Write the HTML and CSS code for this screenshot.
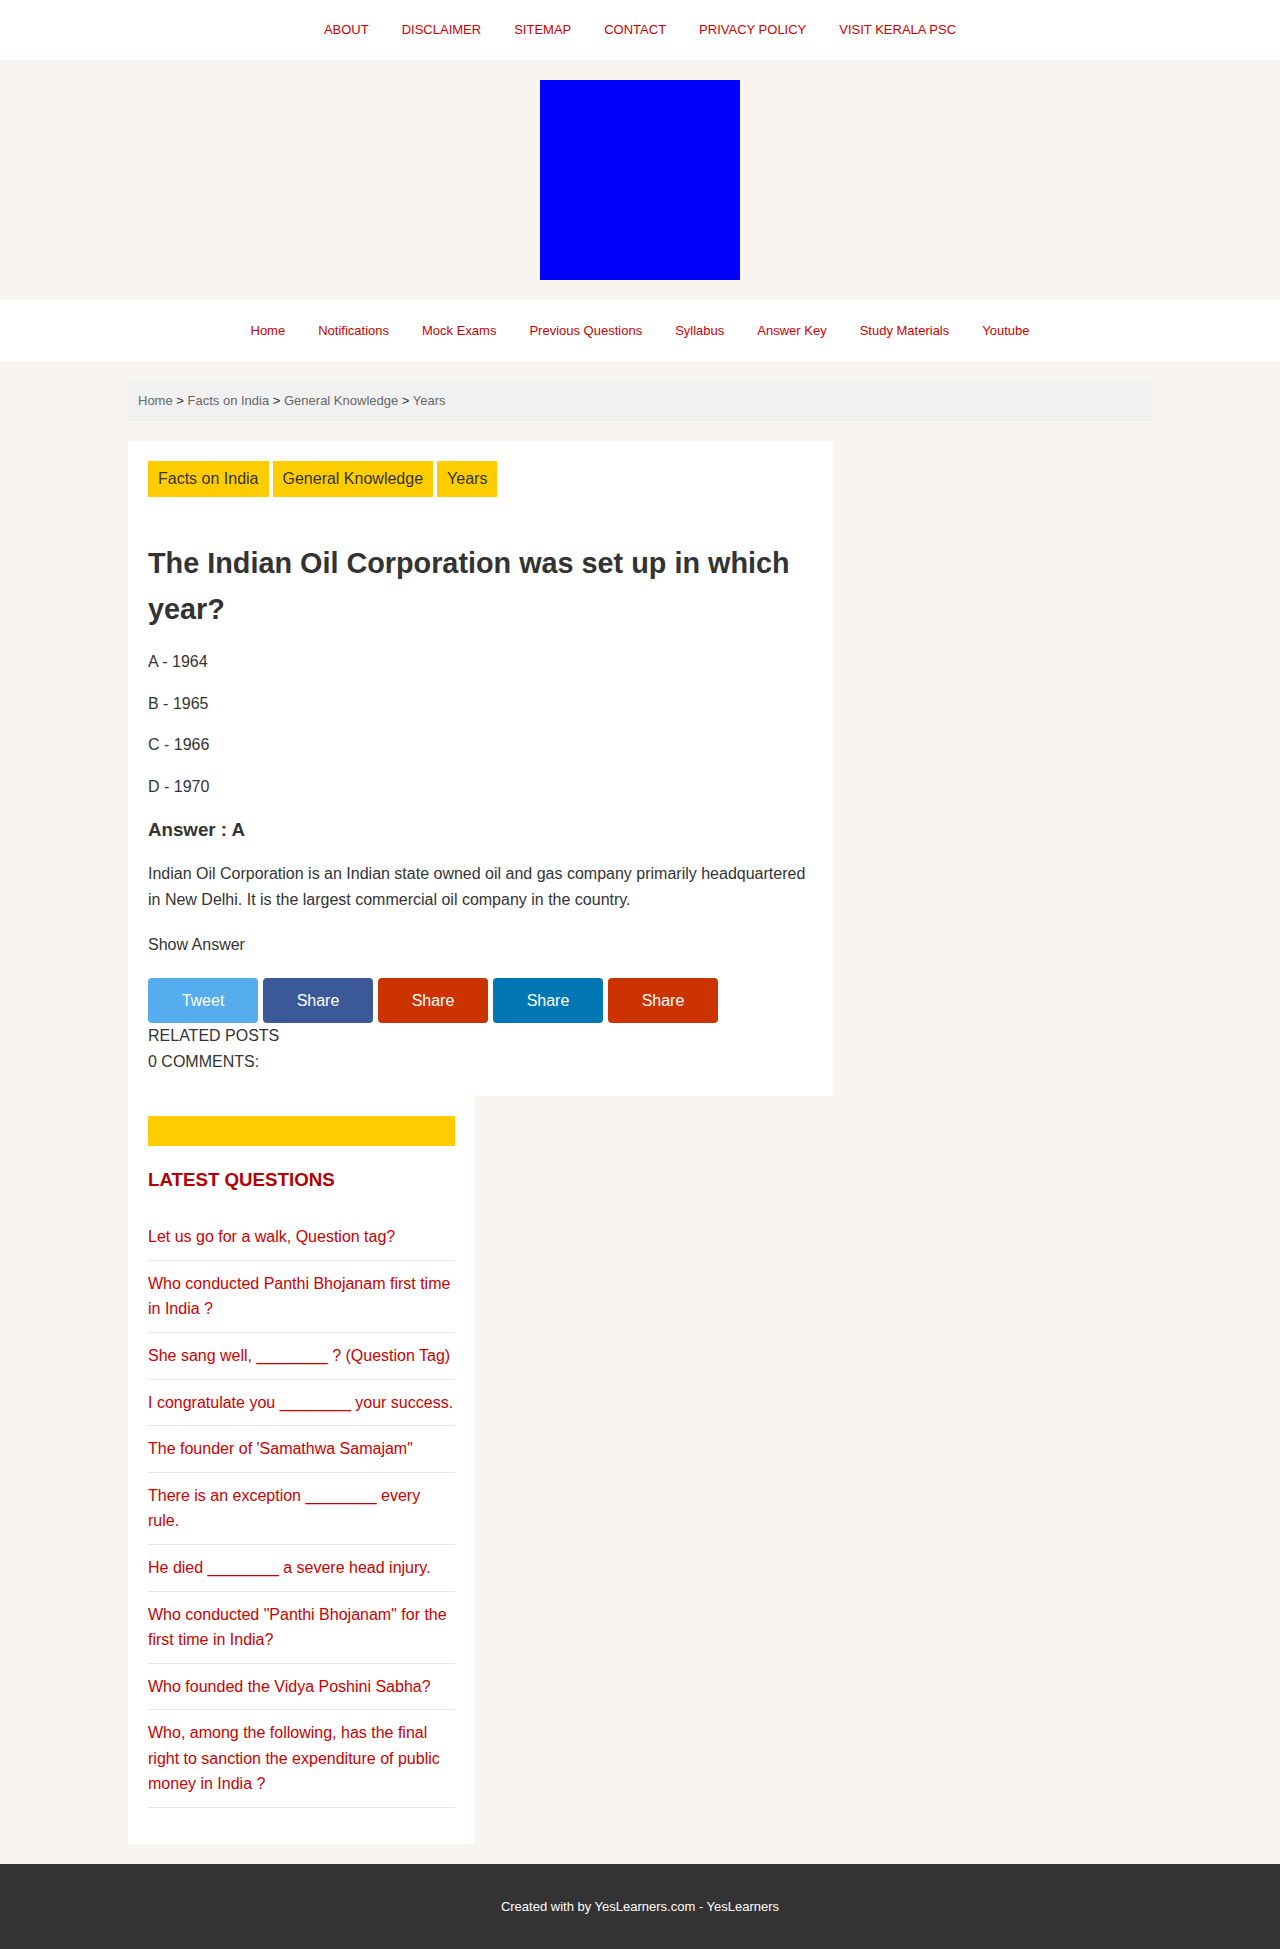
FILE: index.html
```html
<!DOCTYPE html>
<html lang="en">
<head>
<meta charset="utf-8">
<title>The Indian Oil Corporation was set up in which year?</title>
<link rel="stylesheet" href="styles.css">
</head>
<body>
<header class="topbar">
  <nav class="top-nav">
    <a href="#">ABOUT</a>
    <a href="#">DISCLAIMER</a>
    <a href="#">SITEMAP</a>
    <a href="#">CONTACT</a>
    <a href="#">PRIVACY POLICY</a>
    <a href="#">VISIT KERALA PSC</a>
  </nav>
</header>
<div class="brand">
  <div class="logo"></div>
</div>
<nav class="main-nav">
  <a href="#">Home</a>
  <a href="#">Notifications</a>
  <a href="#">Mock Exams</a>
  <a href="#">Previous Questions</a>
  <a href="#">Syllabus</a>
  <a href="#">Answer Key</a>
  <a href="#">Study Materials</a>
  <a href="#">Youtube</a>
</nav>
<div class="container">
  <div class="breadcrumb">
    <a href="#">Home</a> &gt; <a href="#">Facts on India</a> &gt; <a href="#">General Knowledge</a> &gt; <span class="crumb">Years</span>
  </div>
  <div class="layout">
    <main class="post">
      <div class="tags">
        <a href="#" class="tag">Facts on India</a>
        <a href="#" class="tag">General Knowledge</a>
        <a href="#" class="tag">Years</a>
      </div>
      <h1 class="post-title">The Indian Oil Corporation was set up in which year?</h1>
      <p class="option">A - 1964</p>
      <p class="option">B - 1965</p>
      <p class="option">C - 1966</p>
      <p class="option">D - 1970</p>
      <h3 class="answer">Answer : A</h3>
      <p class="explain">Indian Oil Corporation is an Indian state owned oil and gas company primarily headquartered in New Delhi. It is the largest commercial oil company in the country.</p>
      <div class="show-answer">Show Answer</div>
      <div class="share">
        <a href="#" class="btn btn-tw">Tweet</a>
        <a href="#" class="btn btn-fb">Share</a>
        <a href="#" class="btn btn-rd">Share</a>
        <a href="#" class="btn btn-li">Share</a>
        <a href="#" class="btn btn-rd">Share</a>
      </div>
      <div class="meta">RELATED POSTS</div>
      <div class="meta">0 COMMENTS:</div>
    </main>
    <aside class="sidebar">
      <div class="ad-bar"></div>
      <h3 class="side-title">LATEST QUESTIONS</h3>
      <ul class="latest">
        <li><a href="#">Let us go for a walk, Question tag?</a></li>
        <li><a href="#">Who conducted Panthi Bhojanam first time in India ?</a></li>
        <li><a href="#">She sang well, ________ ? (Question Tag)</a></li>
        <li><a href="#">I congratulate you ________ your success.</a></li>
        <li><a href="#">The founder of 'Samathwa Samajam"</a></li>
        <li><a href="#">There is an exception ________ every rule.</a></li>
        <li><a href="#">He died ________ a severe head injury.</a></li>
        <li><a href="#">Who conducted "Panthi Bhojanam" for the first time in India?</a></li>
        <li><a href="#">Who founded the Vidya Poshini Sabha?</a></li>
        <li><a href="#">Who, among the following, has the final right to sanction the expenditure of public money in India ?</a></li>
      </ul>
    </aside>
  </div>
</div>
<footer class="footer">Created with by YesLearners.com - YesLearners</footer>
</body>
</html>
```

FILE: styles.css
```css
* { box-sizing: border-box; }
html, body { margin: 0; padding: 0; }
body {
  background: #f8f5f0;
  font-family: "Liberation Sans", Arial, sans-serif;
  font-size: 16px;
  line-height: 1.6;
  color: #333;
}
a { text-decoration: none; }

.topbar {
  background: #fff;
  height: 60px;
  display: flex;
  align-items: center;
  justify-content: center;
}
.top-nav, .main-nav {
  display: flex;
  justify-content: center;
  align-items: center;
}
.top-nav a, .main-nav a {
  color: #cc0000;
  font-size: 13px;
  line-height: 16px;
  padding: 0 16.5px;
}

.brand {
  padding: 20px 0;
  display: flex;
  justify-content: center;
}
.logo {
  width: 200px;
  height: 200px;
  background: #0000ff;
}

.main-nav {
  background: #fff;
  height: 61px;
}

.container {
  width: 1024px;
  margin: 20px auto 0;
}
.breadcrumb {
  background: #f1f1f1;
  height: 40px;
  padding: 12px 10px;
  font-size: 13px;
  line-height: 16px;
  color: #333;
}
.breadcrumb a, .breadcrumb .crumb { color: #666; }

.layout {
  margin-top: 20px;
  display: flex;
  flex-wrap: wrap;
}
.post {
  width: 706px;
  background: #fff;
  padding: 20px 20px 21px;
}
.tags {
  display: flex;
  gap: 4px;
}
.tag {
  background: #ffcc00;
  color: #333;
  font-size: 16px;
  line-height: 20px;
  padding: 8px 10px;
}
.post-title {
  font-size: 28.8px;
  line-height: 46px;
  font-weight: bold;
  margin: 43px 0 17px;
  color: #333;
}
.option {
  margin: 16px 0;
}
.answer {
  font-size: 18.72px;
  line-height: 30px;
  margin: 16px 0;
  font-weight: bold;
}
.explain { margin: 15px 0 0; }
.show-answer { margin-top: 19px; }
.share {
  display: flex;
  gap: 5px;
  margin-top: 21px;
}
.btn {
  width: 110px;
  height: 45px;
  line-height: 45px;
  text-align: center;
  color: #fff;
  font-size: 16px;
  border-radius: 4px;
}
.btn-tw { background: #55acee; }
.btn-fb { background: #3b5998; }
.btn-rd { background: #cc3300; }
.btn-li { background: #0077b5; }
.meta { line-height: 26px; }

.sidebar {
  width: 347px;
  background: #fff;
  padding: 20px 20px 19px;
}
.ad-bar {
  height: 30px;
  background: #ffcc00;
}
.side-title {
  color: #b30000;
  font-size: 18.72px;
  line-height: 30px;
  font-weight: bold;
  margin: 19px 0;
}
.latest {
  list-style: none;
  margin: 0 0 17px;
  padding: 0;
}
.latest li {
  padding: 10px 0;
  border-bottom: 1px solid #e8e8e8;
  line-height: 25.6px;
}
.latest a { color: #cc0000; }

.footer {
  margin-top: 20px;
  background: #333;
  color: #fff;
  text-align: center;
  font-size: 13px;
  line-height: 16px;
  padding: 35px 0;
}
```
